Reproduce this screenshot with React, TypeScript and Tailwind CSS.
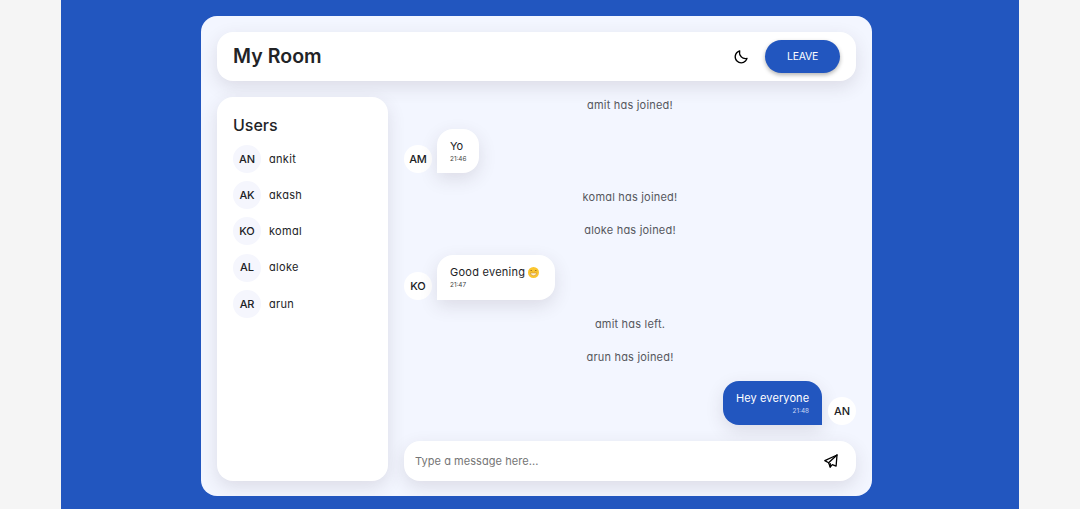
import { BiMoon } from "react-icons/bi";

const users = [
  { initials: "AN", name: "ankit" },
  { initials: "AK", name: "akash" },
  { initials: "KO", name: "komal" },
  { initials: "AL", name: "aloke" },
  { initials: "AR", name: "arun" },
];

function Avatar({ initials, className }: { initials: string; className: string }) {
  return (
    <div className={`flex size-7 shrink-0 items-center justify-center rounded-full text-[11px] font-medium tracking-[-0.1px] text-[#202124] ${className}`}>
      {initials}
    </div>
  );
}

function Notice({ text, className }: { text: string; className: string }) {
  return <p className={`text-center text-[11px] leading-4 tracking-[0.2px] text-[#55575d] ${className}`}>{text}</p>;
}

function GrinEmoji() {
  return (
    <svg viewBox="0 0 24 24" className="size-[11px]" role="img" aria-label="Grinning face">
      <circle cx="12" cy="12" r="12" fill="#fbc62f" />
      <path d="M5 9q2-4 4 0M15 9q2-4 4 0" fill="none" stroke="#8a5b1c" strokeWidth="1.8" />
      <path d="M5 13h14q-1 6-7 6t-7-6z" fill="#fff3d6" stroke="#c58a2a" strokeWidth="1.3" />
    </svg>
  );
}

function PaperPlane() {
  return (
    <svg viewBox="0 0 16 16" className="size-4" fill="none" stroke="#000" strokeWidth="1.3" strokeLinejoin="round" strokeLinecap="round" aria-hidden="true">
      <path d="M14 2 1.8 7.6 5.6 9.8 7.2 14 9.3 11.6 13.1 13.1Z" />
      <path d="M14 2 5.6 9.8M7.2 14 7.3 10.6" />
    </svg>
  );
}

const shadow = "shadow-[0_6px_18px_rgba(60,50,60,0.13)]";

export default function App() {
  return (
    <div className="flex h-[509px] justify-center overflow-hidden bg-[#f5f5f5] font-['Inter','Liberation_Sans',sans-serif] [font-feature-settings:'cv11'] text-[#222326]">
      <div className="w-[958px] bg-[#2256bf] pt-4 pl-[140px]">
        <main className="flex h-[480px] w-[671px] flex-col gap-4 overflow-hidden rounded-2xl bg-[#f3f6ff] p-4 pb-[15px]">
          <header className={`flex h-[49px] shrink-0 items-center rounded-2xl bg-white px-4 ${shadow}`}>
            <h1 className="pt-px text-[19.5px] font-semibold tracking-[0.05px]">My Room</h1>
            <BiMoon className="mr-4 ml-auto size-4 text-black" />
            <button className="h-[33px] w-[75px] rounded-full bg-[#2256bf] text-[10.5px] tracking-[-0.3px] text-white shadow-[0_2px_4px_rgba(0,0,0,0.3)]">LEAVE</button>
          </header>
          <div className="flex min-h-0 grow gap-4">
            <aside className={`w-[171px] shrink-0 rounded-2xl bg-white px-4 pt-[17px] ${shadow}`}>
              <h2 className="text-base leading-[22px] font-medium">Users</h2>
              <ul className="mt-[9px] flex flex-col gap-2">
                {users.map((user) => (
                  <li key={user.name} className="flex h-[28.2px] items-center gap-2 text-[11px] tracking-[0.3px]">
                    <Avatar initials={user.initials} className="bg-[#f5f6fd]" />
                    <span>{user.name}</span>
                  </li>
                ))}
              </ul>
            </aside>
            <section className="flex min-w-0 grow flex-col">
              <Notice text="amit has joined!" className="" />
              <div className="mt-4 flex items-end gap-[5px]">
                <Avatar initials="AM" className="bg-white" />
                <div className={`h-11 w-[42px] rounded-2xl rounded-bl-none bg-white px-[13px] pt-[9px] ${shadow}`}>
                  <p className="text-[11px] leading-4">Yo</p>
                  <time className="block text-[6.4px] leading-[10px] text-[#444]">21:46</time>
                </div>
              </div>
              <Notice text="komal has joined!" className="mt-4" />
              <Notice text="aloke has joined!" className="mt-[17px]" />
              <div className="mt-[17px] flex items-end gap-[5px]">
                <Avatar initials="KO" className="bg-white" />
                <div className={`h-[45px] w-[118px] rounded-2xl rounded-bl-none bg-white px-[13px] pt-[9px] ${shadow}`}>
                  <p className="flex items-center gap-[3px] text-[11px] leading-4 tracking-[0.25px] whitespace-nowrap">Good evening <GrinEmoji /></p>
                  <time className="block text-[6.4px] leading-[10px] text-[#444]">21:47</time>
                </div>
              </div>
              <Notice text="amit has left." className="mt-4" />
              <Notice text="arun has joined!" className="mt-[17px]" />
              <div className="mt-4 flex items-end justify-end gap-[6px]">
                <div className={`h-11 w-[99px] rounded-2xl rounded-br-none bg-[#2256bf] px-[13px] pt-[9px] text-right text-white ${shadow}`}>
                  <p className="text-[11px] leading-4 tracking-[0.1px] whitespace-nowrap">Hey everyone</p>
                  <time className="block text-[6.4px] leading-[10px] text-[#c8d6f5]">21:48</time>
                </div>
                <Avatar initials="AN" className="bg-white" />
              </div>
              <form className={`mt-auto flex h-10 shrink-0 items-center rounded-2xl bg-white pr-[17px] pl-[11px] ${shadow}`}>
                <input className="min-w-0 grow text-[11px] tracking-[0.06px] outline-none placeholder:text-[#757575]" placeholder="Type a message here..." />
                <PaperPlane />
              </form>
            </section>
          </div>
        </main>
      </div>
    </div>
  );
}
